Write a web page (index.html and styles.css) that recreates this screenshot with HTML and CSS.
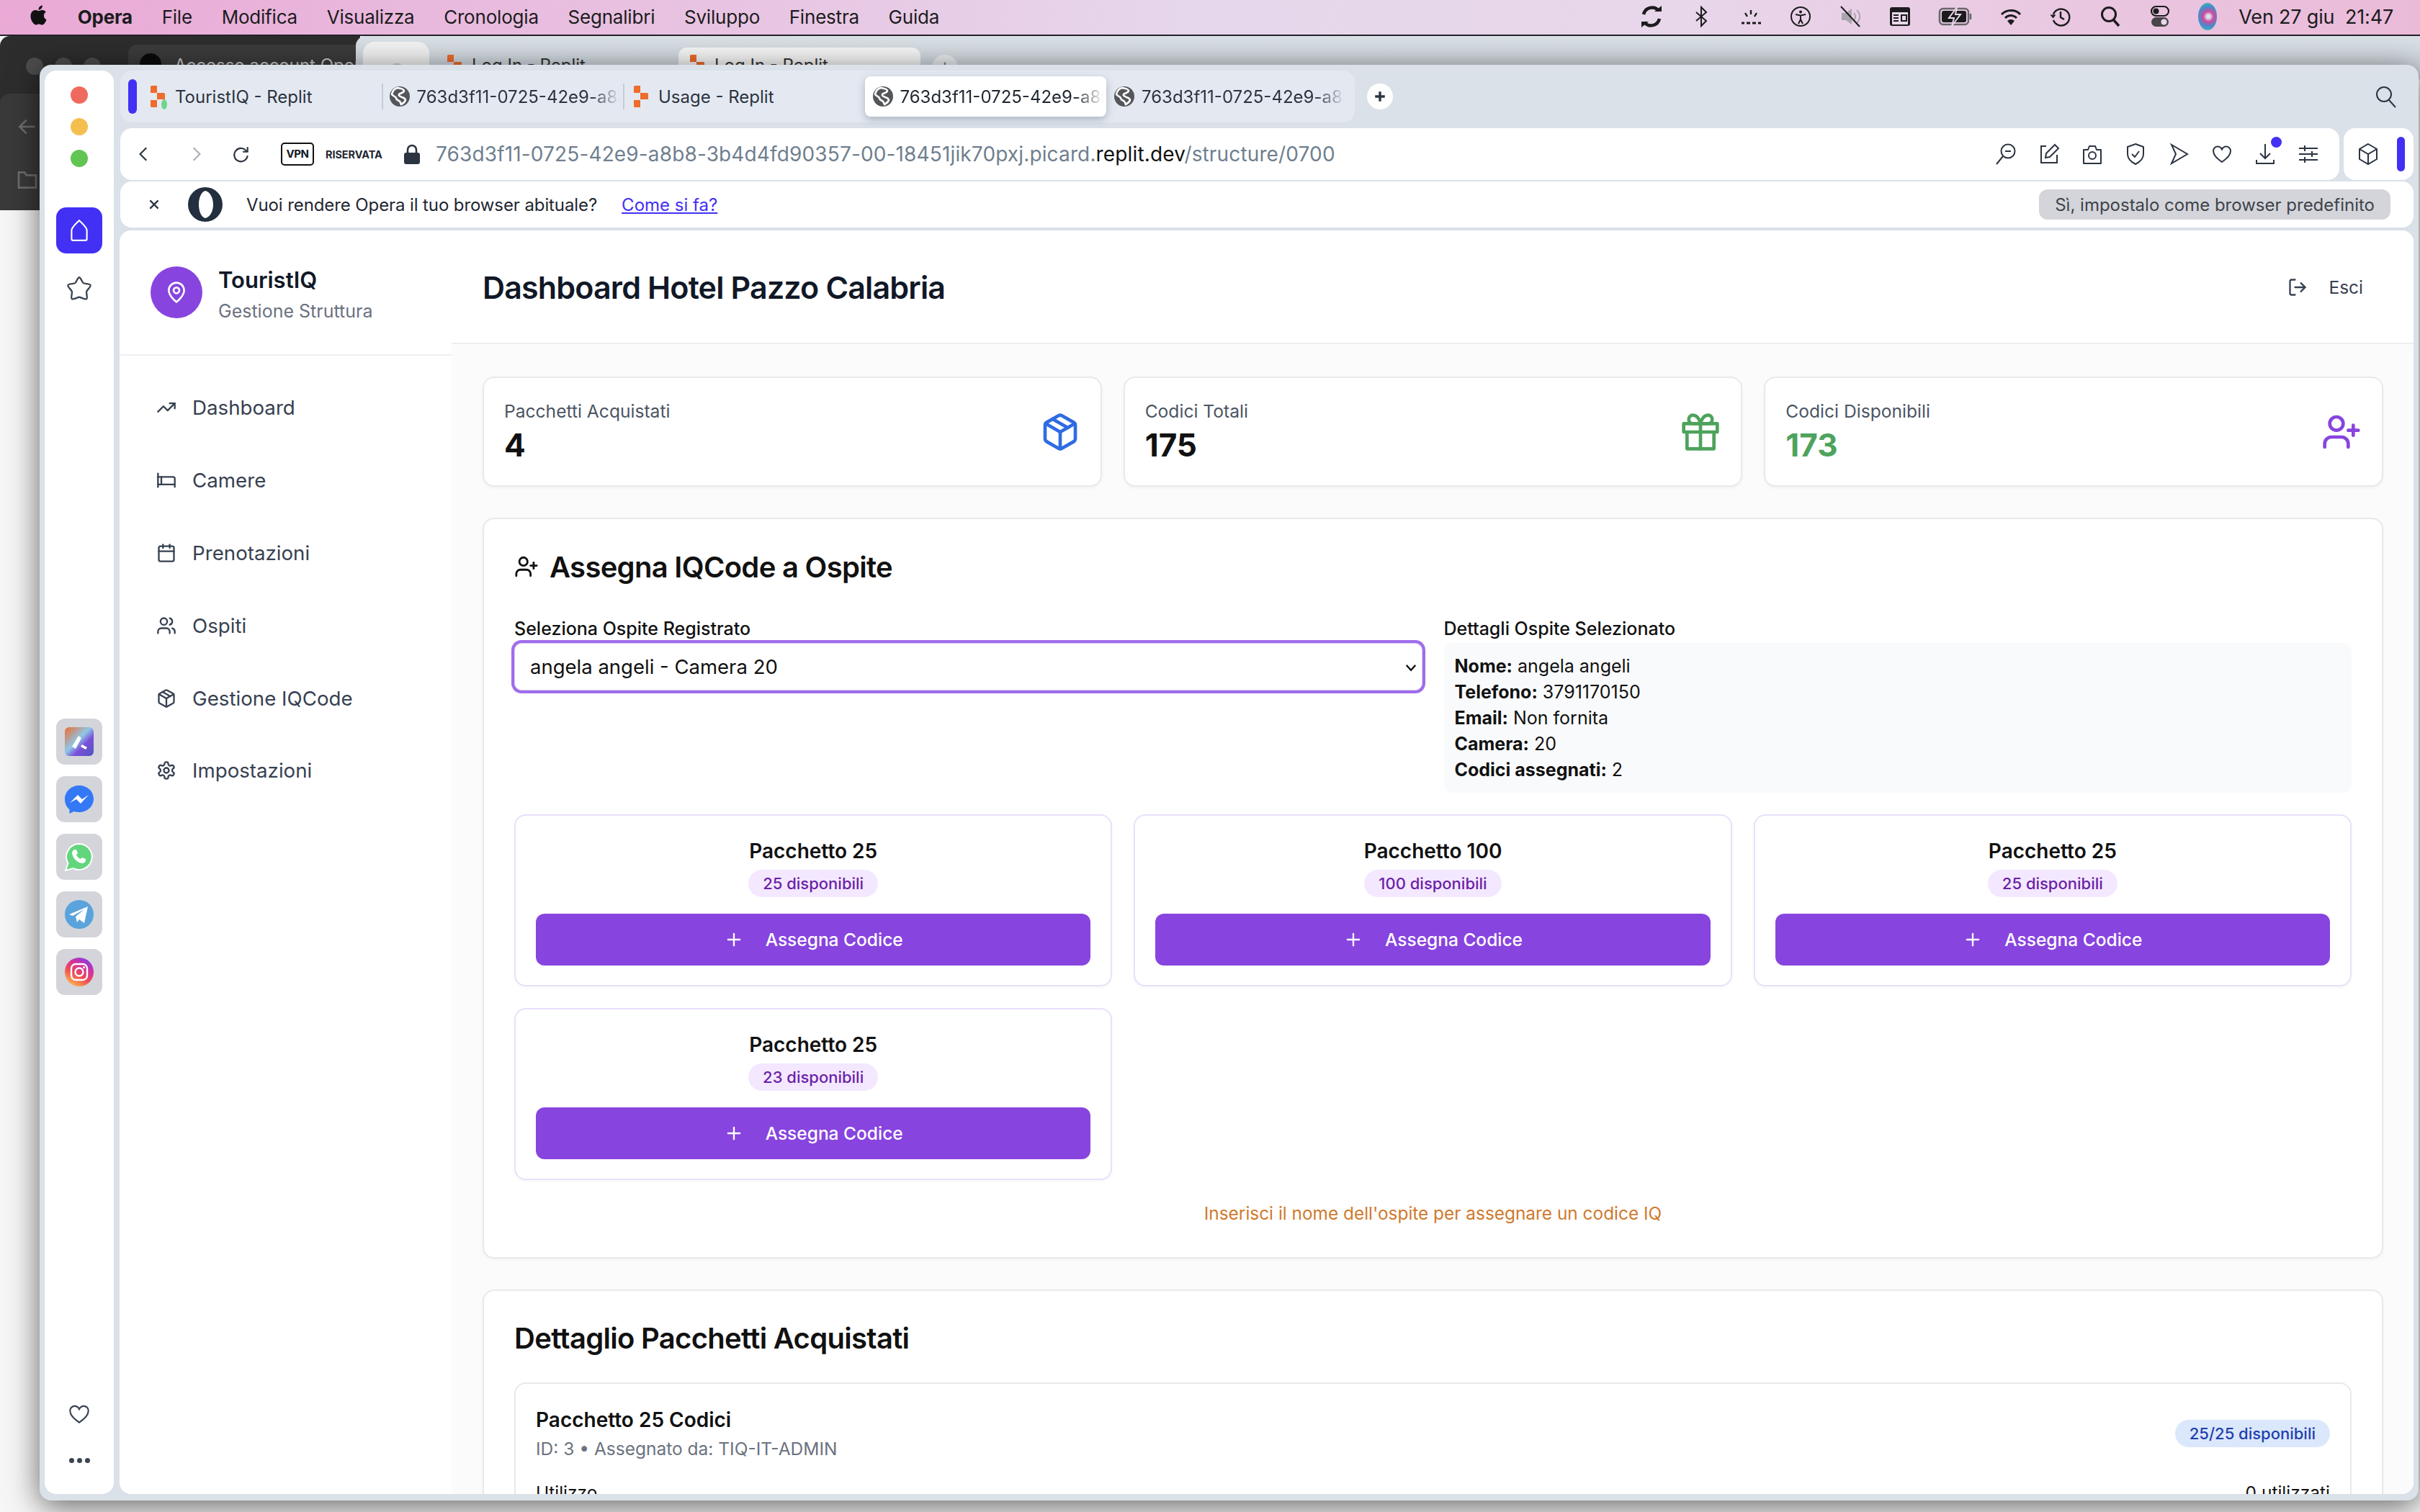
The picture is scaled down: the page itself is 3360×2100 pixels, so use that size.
FILE: index.html
```html
<!DOCTYPE html>
<html lang="it">
<head>
<meta charset="utf-8">
<title>TouristIQ</title>
<link rel="stylesheet" href="styles.css">
</head>
<body>
<svg class="defs" width="0" height="0" aria-hidden="true">
  <defs>
    <symbol id="i-pin" viewBox="0 0 24 24"><path d="M20 10c0 6-8 12-8 12s-8-6-8-12a8 8 0 0 1 16 0Z"/><circle cx="12" cy="10" r="3"/></symbol>
    <symbol id="i-trend" viewBox="0 0 24 24"><polyline points="22 7 13.5 15.5 8.5 10.5 2 17"/><polyline points="16 7 22 7 22 13"/></symbol>
    <symbol id="i-bed" viewBox="0 0 24 24"><path d="M2 4v16"/><path d="M2 8h18a2 2 0 0 1 2 2v10"/><path d="M2 17h20"/><path d="M6 8v9"/></symbol>
    <symbol id="i-cal" viewBox="0 0 24 24"><rect x="3" y="4" width="18" height="18" rx="2"/><line x1="16" y1="2" x2="16" y2="6"/><line x1="8" y1="2" x2="8" y2="6"/><line x1="3" y1="10" x2="21" y2="10"/></symbol>
    <symbol id="i-users" viewBox="0 0 24 24"><path d="M16 21v-2a4 4 0 0 0-4-4H6a4 4 0 0 0-4 4v2"/><circle cx="9" cy="7" r="4"/><path d="M22 21v-2a4 4 0 0 0-3-3.87"/><path d="M16 3.13a4 4 0 0 1 0 7.75"/></symbol>
    <symbol id="i-package" viewBox="0 0 24 24"><path d="m7.5 4.27 9 5.15"/><path d="M21 8a2 2 0 0 0-1-1.73l-7-4a2 2 0 0 0-2 0l-7 4A2 2 0 0 0 3 8v8a2 2 0 0 0 1 1.73l7 4a2 2 0 0 0 2 0l7-4a2 2 0 0 0 1-1.73Z"/><path d="m3.3 7 8.7 5 8.7-5"/><path d="M12 22V12"/></symbol>
    <symbol id="i-gear" viewBox="0 0 24 24"><path d="M12.22 2h-.44a2 2 0 0 0-2 2v.18a2 2 0 0 1-1 1.73l-.43.25a2 2 0 0 1-2 0l-.15-.08a2 2 0 0 0-2.73.73l-.22.38a2 2 0 0 0 .73 2.73l.15.1a2 2 0 0 1 1 1.72v.51a2 2 0 0 1-1 1.74l-.15.09a2 2 0 0 0-.73 2.73l.22.38a2 2 0 0 0 2.73.73l.15-.08a2 2 0 0 1 2 0l.43.25a2 2 0 0 1 1 1.73V20a2 2 0 0 0 2 2h.44a2 2 0 0 0 2-2v-.18a2 2 0 0 1 1-1.73l.43-.25a2 2 0 0 1 2 0l.15.08a2 2 0 0 0 2.73-.73l.22-.39a2 2 0 0 0-.73-2.73l-.15-.08a2 2 0 0 1-1-1.74v-.5a2 2 0 0 1 1-1.74l.15-.09a2 2 0 0 0 .73-2.73l-.22-.38a2 2 0 0 0-2.73-.73l-.15.08a2 2 0 0 1-2 0l-.43-.25a2 2 0 0 1-1-1.73V4a2 2 0 0 0-2-2z"/><circle cx="12" cy="12" r="3"/></symbol>
    <symbol id="i-gift" viewBox="0 0 24 24"><polyline points="20 12 20 22 4 22 4 12"/><rect x="2" y="7" width="20" height="5"/><line x1="12" y1="22" x2="12" y2="7"/><path d="M12 7H7.5a2.5 2.5 0 0 1 0-5C11 2 12 7 12 7z"/><path d="M12 7h4.5a2.5 2.5 0 0 0 0-5C13 2 12 7 12 7z"/></symbol>
    <symbol id="i-userplus" viewBox="0 0 24 24"><path d="M16 21v-2a4 4 0 0 0-4-4H6a4 4 0 0 0-4 4v2"/><circle cx="9" cy="7" r="4"/><line x1="19" y1="8" x2="19" y2="14"/><line x1="22" y1="11" x2="16" y2="11"/></symbol>
    <symbol id="i-logout" viewBox="0 0 24 24"><path d="M9 21H5a2 2 0 0 1-2-2V5a2 2 0 0 1 2-2h4"/><polyline points="16 17 21 12 16 7"/><line x1="21" y1="12" x2="9" y2="12"/></symbol>
    <symbol id="i-plus" viewBox="0 0 24 24"><path d="M5 12h14"/><path d="M12 5v14"/></symbol>
    <symbol id="i-globe" viewBox="0 0 28 28"><circle cx="14" cy="14" r="14" fill="#54565a"/><path d="M11 2c4 1 8 1 9 4 0 3-5 3-7 5-1 2 2 3 4 4 3 1 5 2 5 4-1 3-4 5-6 6-1-2-1-4-3-5-3-1-4-2-4-4-1-2-5-3-6-5 1-5 4-8 8-9z" fill="none" stroke="#fff" stroke-width="2.6"/></symbol>
    <symbol id="i-replit" viewBox="0 0 20 30"><path d="M0 1.5A1.5 1.5 0 0 1 1.500 0H9v10H0zM9 10h9.500A1.500 1.500 0 0 1 20 11.500V19H9zM0 20h9v10H1.500A1.500 1.500 0 0 1 0 28.500z" fill="#ee6c2c"/></symbol>
    <symbol id="i-heart" viewBox="0 0 32 32"><path d="M16 27C8 21 4 17 4 11.500 4 8 7 5.500 10 5.500c2.500 0 4.700 1.300 6 4 1.300-2.700 3.500-4 6-4 3 0 6 2.500 6 6 0 5.500-4 9.500-12 15.500z"/></symbol>
  </defs>
</svg>

<div class="desktop">
  <header class="menubar">
    <div class="menu-left">
      <svg class="apple" viewBox="0 0 24 24"><path d="M12.152 6.896c-.948 0-2.415-1.078-3.960-1.040-2.040.027-3.910 1.183-4.961 3.014-2.117 3.675-.546 9.103 1.519 12.090 1.013 1.454 2.208 3.090 3.792 3.039 1.520-.065 2.090-.987 3.935-.987 1.831 0 2.350.987 3.960.948 1.637-.026 2.676-1.480 3.676-2.948 1.156-1.688 1.636-3.325 1.662-3.415-.039-.013-3.182-1.221-3.220-4.857-.026-3.040 2.480-4.494 2.597-4.559-1.429-2.090-3.623-2.324-4.390-2.376-2-.156-3.675 1.090-4.610 1.090zM15.530 3.830c.843-1.012 1.400-2.427 1.245-3.830-1.207.052-2.662.805-3.532 1.818-.780.896-1.454 2.338-1.273 3.714 1.338.104 2.715-.688 3.559-1.701"/></svg>
      <b class="menu-app">Opera</b>
      <span>File</span><span>Modifica</span><span>Visualizza</span><span>Cronologia</span><span>Segnalibri</span><span>Sviluppo</span><span>Finestra</span><span>Guida</span>
    </div>
    <div class="menu-right">
      <svg class="st" viewBox="0 0 32 32"><g fill="none" stroke="#1c1c1e" stroke-width="4.500"><path d="M26 8A12 12 0 0 0 5 13"/><path d="M6 24a12 12 0 0 0 21-5"/></g><path d="M20 9h10V1zM12 23H2v8z" fill="#1c1c1e"/></svg>
      <svg class="st" viewBox="0 0 32 32"><path d="m9 10 14 12-7 7V3l7 7L9 22" fill="none" stroke="#1c1c1e" stroke-width="2"/></svg>
      <svg class="st" viewBox="0 0 32 32"><g fill="none" stroke="#1c1c1e" stroke-width="2.400"><path d="M16 7v6M8 11l3 5M24 11l-3 5"/><path d="M3 25h4M10 25h5M18 25h5M26 25h4" stroke-width="3"/></g></svg>
      <svg class="st" viewBox="0 0 32 32"><circle cx="16" cy="16" r="13" fill="none" stroke="#1c1c1e" stroke-width="2"/><circle cx="16" cy="9.500" r="2" fill="#1c1c1e"/><path d="M9 13l7 1.500 7-1.500M16 14v6l-3 6M16 20l3 6" fill="none" stroke="#1c1c1e" stroke-width="2"/></svg>
      <svg class="st" viewBox="0 0 32 32"><path d="M4 11h6l8-6v22l-8-6H4z" fill="#a9a4ad"/><path d="M21 11a7 7 0 0 1 0 10M25 7a12 12 0 0 1 0 18" fill="none" stroke="#a9a4ad" stroke-width="2"/><path d="M3 2l26 28" stroke="#1c1c1e" stroke-width="2"/></svg>
      <svg class="st" viewBox="0 0 32 32"><rect x="2" y="3" width="28" height="26" rx="3" fill="#1c1c1e"/><rect x="5" y="10" width="22" height="17" fill="#e9d8ea"/><path d="M7 14h7M7 18h7M7 22h7M18 14h7v8h-7z" stroke="#1c1c1e" stroke-width="2" fill="none"/></svg>
      <svg class="st st-wide" viewBox="0 0 48 32"><rect x="2" y="5" width="40" height="22" rx="5" fill="none" stroke="#6a666c" stroke-width="2.500"/><rect x="5" y="8" width="34" height="16" rx="3" fill="#1c1c1e"/><path d="M26 3 15 18h7l-3 11 12-16h-7z" fill="#1c1c1e" stroke="#e9d8ea" stroke-width="2"/><path d="M45 12v8" stroke="#6a666c" stroke-width="2.500"/></svg>
      <svg class="st" viewBox="0 0 32 32"><path d="M3 13a18 18 0 0 1 26 0M8 18a11 11 0 0 1 16 0" fill="none" stroke="#1c1c1e" stroke-width="3"/><path d="M16 28l-5-6a7 7 0 0 1 10 0z" fill="#1c1c1e"/></svg>
      <svg class="st" viewBox="0 0 32 32"><path d="M6 13a11.500 11.500 0 1 1 0 8" fill="none" stroke="#1c1c1e" stroke-width="2.400"/><path d="M1.500 13.500h8l-4 5z" fill="#1c1c1e"/><path d="M16 9v8l5 3" fill="none" stroke="#1c1c1e" stroke-width="2.400"/></svg>
      <svg class="st" viewBox="0 0 32 32"><circle cx="14" cy="13" r="9.500" fill="none" stroke="#1c1c1e" stroke-width="3"/><path d="M20 20l8 9" stroke="#1c1c1e" stroke-width="3.500"/></svg>
      <svg class="st" viewBox="0 0 32 32"><rect x="4" y="2" width="24" height="13" rx="6.500" fill="none" stroke="#1c1c1e" stroke-width="2.200"/><circle cx="10.500" cy="8.500" r="4" fill="#1c1c1e"/><rect x="4" y="17" width="24" height="13" rx="6.500" fill="#47444a"/><circle cx="21.500" cy="23.500" r="4" fill="#e9d8ea"/></svg>
      <span class="siri"></span>
      <span class="clock">Ven 27 giu&nbsp; 21:47</span>
    </div>
  </header>

  <div class="back-dark">
    <span class="bd-dot bd-dot-1"></span><span class="bd-dot bd-dot-2"></span><span class="bd-dot bd-dot-3"></span>
    <div class="bd-tab"><i class="bd-logo"></i>Accesso account Opera</div>
    <div class="bd-panel">
      <svg class="bd-arrow" viewBox="0 0 24 24"><path d="M20 12H4M11 5l-7 7 7 7"/></svg>
      <svg class="bd-folder" viewBox="0 0 24 24"><path d="M3 20V4h6l2 3h10v13z"/></svg>
    </div>
  </div>
  <div class="back-light">
    <div class="bl-pill"><i></i></div>
    <div class="bl-tab bl-tab-plain"><svg class="fav"><use href="#i-replit"/></svg>Log In - Replit</div>
    <div class="bl-tab bl-tab-white"><svg class="fav"><use href="#i-replit"/></svg>Log In - Replit</div>
    <i class="bl-plus">+</i>
  </div>

  <div class="window">
    <aside class="rail">
      <span class="light light-r"></span><span class="light light-y"></span><span class="light light-g"></span>
      <div class="rail-home"><svg viewBox="0 0 32 32"><path d="M16 3c3 3 10 9 10 13v11a2 2 0 0 1-2 2H8a2 2 0 0 1-2-2V16C6 12 13 6 16 3z"/></svg></div>
      <svg class="rail-star" viewBox="0 0 36 36"><path d="M18 4c2 0 3.500 6 5.500 7.500 2 1.300 8.500.8 9.300 2.800.7 2.200-4.600 6-5.200 8.400-.6 2.300 1.800 8.300 0 9.700-1.800 1.300-7.100-2.300-9.600-2.300s-7.800 3.600-9.600 2.300c-1.800-1.400.6-7.400 0-9.700-.6-2.400-5.900-6.200-5.200-8.400.8-2 7.300-1.500 9.300-2.800C14.500 10 16 4 18 4z"/></svg>
      <div class="rail-apps">
        <div class="app"><svg viewBox="0 0 40 40"><defs><linearGradient id="g-aria" x1="0" y1="0" x2="1" y2="1"><stop offset="0" stop-color="#f06a2e"/><stop offset=".45" stop-color="#8fc8e8"/><stop offset=".65" stop-color="#7a50d8"/><stop offset="1" stop-color="#4f56c0"/></linearGradient></defs><rect width="40" height="40" rx="6" fill="url(#g-aria)"/><path d="M10 27 19 12l4 3-8 15zM24 24l7 4-2 3-7-4z" fill="#fff"/></svg></div>
        <div class="app"><svg viewBox="0 0 40 40"><path d="M20 1C9 1 0 9 0 20c0 6 2.500 11 6.500 14.500V40l6-3c2.300.7 4.800 1 7.500 1 11 0 20-8 20-18.500S31 1 20 1z" fill="#3478f6"/><path d="M7 25l11-11 6 6 9-6-11 12-6-6z" fill="#fff"/></svg></div>
        <div class="app"><svg viewBox="0 0 40 40"><path d="M20 2a18 18 0 0 0-15.500 27L1 39l10.500-3A18 18 0 1 0 20 2z" fill="#63d57d" stroke="#fff" stroke-width="2"/><path d="M13 10c-2 1-3 3-3 5 1 7 7 13 14 14 2 0 4-1 5-3l0-3-5-2-2 2c-3-1-5-3-6-6l2-2-2-5z" fill="#fff"/></svg></div>
        <div class="app"><svg viewBox="0 0 40 40"><circle cx="20" cy="20" r="20" fill="#5aa3dc"/><path d="M6 20 32 9l-5 23-7-5-3 4-2-8 12-10-16 9z" fill="#fff"/></svg></div>
        <div class="app"><svg viewBox="0 0 40 40"><defs><linearGradient id="g-ig" x1=".2" y1="1" x2=".8" y2="0"><stop offset="0" stop-color="#fdc34f"/><stop offset=".4" stop-color="#ef4a55"/><stop offset=".7" stop-color="#d0319f"/><stop offset="1" stop-color="#7a3ff0"/></linearGradient></defs><circle cx="20" cy="20" r="20" fill="url(#g-ig)"/><rect x="9" y="9" width="22" height="22" rx="6" fill="none" stroke="#fff" stroke-width="2.400"/><circle cx="20" cy="20" r="5.500" fill="none" stroke="#fff" stroke-width="2.400"/><circle cx="26.500" cy="13.500" r="1.600" fill="#fff"/></svg></div>
      </div>
      <svg class="rail-heart"><use href="#i-heart"/></svg>
      <div class="rail-dots"><i></i><i></i><i></i></div>
    </aside>

    <div class="browser">
      <div class="tabrow">
        <div class="tabstrip">
          <span class="strip-mark"></span>
          <div class="tab tab-replit"><svg class="fav"><use href="#i-replit"/></svg><i class="fav-dot"></i><span class="tab-name">TouristIQ - Replit</span></div>
          <div class="tab tab-sep"><svg class="globe"><use href="#i-globe"/></svg><span class="tab-name tab-fade">763d3f11-0725-42e9-a8b8</span></div>
          <div class="tab tab-replit tab-sep"><svg class="fav"><use href="#i-replit"/></svg><span class="tab-name">Usage - Replit</span></div>
          <div class="tab tab-active"><svg class="globe"><use href="#i-globe"/></svg><span class="tab-name tab-fade">763d3f11-0725-42e9-a8b8</span></div>
          <div class="tab"><svg class="globe"><use href="#i-globe"/></svg><span class="tab-name tab-fade">763d3f11-0725-42e9-a8b8</span></div>
        </div>
        <span class="newtab"><svg viewBox="0 0 16 16"><path d="M8 2v12M2 8h12"/></svg></span>
        <svg class="tab-search" viewBox="0 0 32 32"><circle cx="13" cy="13" r="10"/><path d="M20 21l9 10"/></svg>
      </div>

      <div class="addrrow">
        <div class="addr">
          <svg class="nav-a nav-back" viewBox="0 0 24 24"><path d="M15 4 7 12l8 8"/></svg>
          <svg class="nav-a nav-off" viewBox="0 0 24 24"><path d="m9 4 8 8-8 8"/></svg>
          <svg class="nav-a" viewBox="0 0 24 24"><path d="M19 9a8.500 8.500 0 1 0 1 5"/><path d="M20 3v6h-6" /></svg>
          <span class="vpn">VPN</span>
          <span class="vpn-label">RISERVATA</span>
          <svg class="lock" viewBox="0 0 24 28"><path d="M6 13V8a6 6 0 0 1 12 0v5" fill="none" stroke="#2b3440" stroke-width="2.600"/><rect x="1" y="12" width="22" height="16" rx="3" fill="#2b3440"/></svg>
          <span class="url">763d3f11-0725-42e9-a8b8-3b4d4fd90357-00-18451jik70pxj.picard.<em>replit.dev</em>/structure/0700</span>
          <div class="addr-tools">
            <svg viewBox="0 0 32 32"><circle cx="19" cy="12" r="9.500"/><path d="M12 19 3 30M15 12h8"/></svg>
            <svg viewBox="0 0 32 32"><path d="M12 5H5v23h22v-11"/><path d="M24 3l5 5-12 12-6 1 1-6z"/></svg>
            <svg viewBox="0 0 32 32"><path d="M4 10h6l2-5h8l2 5h6v19H4z" stroke-linejoin="round"/><circle cx="16" cy="18" r="5"/></svg>
            <svg viewBox="0 0 32 32"><path d="M16 2l11 4v10c0 7-5 11-11 14C10 27 5 23 5 16V6z"/><path d="M11 16l4 4 6-8"/></svg>
            <svg viewBox="0 0 32 32"><path d="M6 3l22 13L6 29l6-13z"/></svg>
            <svg viewBox="0 0 32 32"><use href="#i-heart"/></svg>
            <svg viewBox="0 0 32 32"><path d="M16 2v20M9 15l7 7 7-7M4 24v5h24v-5"/></svg>
            <svg viewBox="0 0 32 32"><path d="M3 8h26M3 16h26M3 24h26M11 4v8M21 12v8M11 20v8"/></svg>
            <i class="dl-dot"></i>
          </div>
        </div>
        <div class="addr-side">
          <svg viewBox="0 0 32 32"><path d="M16 2l12 7v14l-12 7-12-7V9z"/><path d="M4 9l12 7 12-7M16 16v14"/></svg>
          <span class="side-mark"></span>
        </div>
      </div>

      <div class="notice">
        <svg class="notice-x" viewBox="0 0 16 16"><path d="M3 3l10 10M13 3 3 13"/></svg>
        <svg class="opera" viewBox="0 0 48 48"><path fill-rule="evenodd" d="M24 0a24 24 0 1 0 0 48 24 24 0 0 0 0-48zm0 5c-5 1-9 9-9 19s4 18 9 19c6-1 11-9 11-19S30 6 24 5z" fill="#232f3e"/></svg>
        <span class="notice-text">Vuoi rendere Opera il tuo browser abituale?</span>
        <a class="notice-link">Come si fa?</a>
        <span class="notice-btn">Sì, impostalo come browser predefinito</span>
      </div>

      <div class="page">
        <aside class="sidebar">
          <div class="brand">
            <span class="brand-logo"><svg class="ic"><use href="#i-pin"/></svg></span>
            <div class="brand-text">
              <div class="brand-name">TouristIQ</div>
              <div class="brand-sub">Gestione Struttura</div>
            </div>
          </div>
          <nav class="nav">
            <a class="nav-item"><svg class="ic"><use href="#i-trend"/></svg>Dashboard</a>
            <a class="nav-item"><svg class="ic"><use href="#i-bed"/></svg>Camere</a>
            <a class="nav-item"><svg class="ic"><use href="#i-cal"/></svg>Prenotazioni</a>
            <a class="nav-item"><svg class="ic"><use href="#i-users"/></svg>Ospiti</a>
            <a class="nav-item"><svg class="ic"><use href="#i-package"/></svg>Gestione IQCode</a>
            <a class="nav-item"><svg class="ic"><use href="#i-gear"/></svg>Impostazioni</a>
          </nav>
        </aside>

        <main class="main">
          <div class="main-head">
            <h1>Dashboard Hotel Pazzo Calabria</h1>
            <div class="logout"><svg class="ic"><use href="#i-logout"/></svg>Esci</div>
          </div>
          <div class="main-body">
            <section class="stats">
              <div class="stat"><div><div class="stat-label">Pacchetti Acquistati</div><div class="stat-value">4</div></div><svg class="ic stat-ic c-blue"><use href="#i-package"/></svg></div>
              <div class="stat"><div><div class="stat-label">Codici Totali</div><div class="stat-value">175</div></div><svg class="ic stat-ic c-green"><use href="#i-gift"/></svg></div>
              <div class="stat"><div><div class="stat-label">Codici Disponibili</div><div class="stat-value c-green">173</div></div><svg class="ic stat-ic c-purple"><use href="#i-userplus"/></svg></div>
            </section>

            <section class="card card-assign">
              <h2 class="card-title"><svg class="ic"><use href="#i-userplus"/></svg>Assegna IQCode a Ospite</h2>
              <div class="assign-grid">
                <div>
                  <div class="field-label">Seleziona Ospite Registrato</div>
                  <div class="select-wrap">
                    <select class="select"><option>angela angeli - Camera 20</option></select>
                    <svg class="chev" viewBox="0 0 16 16"><path d="M3 5.500 8 11l5-5.500"/></svg>
                  </div>
                </div>
                <div>
                  <div class="field-label">Dettagli Ospite Selezionato</div>
                  <div class="guest">
                    <div><b>Nome:</b> angela angeli</div>
                    <div><b>Telefono:</b> 3791170150</div>
                    <div><b>Email:</b> Non fornita</div>
                    <div><b>Camera:</b> 20</div>
                    <div><b>Codici assegnati:</b> 2</div>
                  </div>
                </div>
              </div>
              <div class="packs">
                <div class="pack"><div class="pack-name">Pacchetto 25</div><span class="pack-badge">25 disponibili</span><button class="pack-btn"><svg class="ic"><use href="#i-plus"/></svg>Assegna Codice</button></div>
                <div class="pack"><div class="pack-name">Pacchetto 100</div><span class="pack-badge">100 disponibili</span><button class="pack-btn"><svg class="ic"><use href="#i-plus"/></svg>Assegna Codice</button></div>
                <div class="pack"><div class="pack-name">Pacchetto 25</div><span class="pack-badge">25 disponibili</span><button class="pack-btn"><svg class="ic"><use href="#i-plus"/></svg>Assegna Codice</button></div>
                <div class="pack"><div class="pack-name">Pacchetto 25</div><span class="pack-badge">23 disponibili</span><button class="pack-btn"><svg class="ic"><use href="#i-plus"/></svg>Assegna Codice</button></div>
              </div>
              <p class="warn">Inserisci il nome dell'ospite per assegnare un codice IQ</p>
            </section>

            <section class="card card-detail">
              <h2 class="card-title card-title-detail">Dettaglio Pacchetti Acquistati</h2>
              <div class="detail">
                <div class="detail-head">
                  <div>
                    <div class="detail-name">Pacchetto 25 Codici</div>
                    <div class="detail-sub">ID: 3 • Assegnato da: TIQ-IT-ADMIN</div>
                  </div>
                  <span class="detail-badge">25/25 disponibili</span>
                </div>
                <div class="detail-use"><span>Utilizzo</span><span>0 utilizzati</span></div>
              </div>
            </section>
          </div>
        </main>
      </div>
    </div>
  </div>
</div>
</body>
</html>
```
FILE: styles.css
```css
* { box-sizing: border-box; }
html, body { margin: 0; height: 100%; }
body { background: #f6f6f6; font-family: Inter, "Noto Sans", sans-serif; color: #111827; overflow: hidden; }
.defs { position: absolute; }
.desktop { position: relative; width: 3360px; height: 2100px; overflow: hidden; }

/* macOS menu bar */
.menubar { position: relative; z-index: 3; height: 50px; border-bottom: 2px solid #25202a; padding: 0 37px 2px 40px;
  display: flex; align-items: center; justify-content: space-between;
  background: linear-gradient(90deg, #eaa9d6 0%, #e8c4e2 30%, #e6d8ec 50%, #e8d6ea 70%, #ebbad9 100%);
  font-size: 26px; color: #1c1c1e; letter-spacing: -.2px; }
.menu-left { display: flex; align-items: center; gap: 40.700px; }
.apple { width: 27px; height: 32px; fill: #111; margin-top: -4px; }
.menu-app { font-weight: 700; }
.menu-right { display: flex; align-items: center; gap: 37px; }
.st { width: 32px; height: 32px; }
.st-wide { width: 48px; }
.siri { width: 26px; height: 38px; border-radius: 50%; background: radial-gradient(circle at 55% 50%, #d8e0f0 0 10%, #d04a9a 30%, #3f8fd0 60%, #52c0a0 90%); }
.clock { font-size: 27px; margin-left: -7px; }

/* windows behind */
.back-dark { position: absolute; left: 0; top: 50px; width: 500px; height: 242px; background: #2d2d2d; border-radius: 14px 0 0 0; overflow: hidden; }
.bd-dot { position: absolute; top: 30px; width: 24px; height: 24px; border-radius: 50%; background: #4d4d4d; }
.bd-dot-1 { left: 36px; }
.bd-dot-2 { left: 76px; }
.bd-dot-3 { left: 116px; }
.bd-tab { position: absolute; left: 178px; top: 12px; width: 330px; height: 60px; border-radius: 12px; background: #3b3b3b; color: #c8c8c8; font-size: 24px; padding: 14px 0 0 64px; white-space: nowrap; }
.bd-logo { position: absolute; left: 16px; top: 12px; width: 30px; height: 30px; border-radius: 50%; background: #0a0a0a; }
.bd-panel { position: absolute; left: 0; top: 80px; right: 0; bottom: 0; background: #3a3a3a; border-radius: 14px 0 0 0; }
.bd-arrow, .bd-folder { position: absolute; left: 22px; width: 32px; height: 32px; fill: none; stroke: #6e6e6e; stroke-width: 2; }
.bd-arrow { top: 30px; }
.bd-folder { top: 104px; }
.back-light { position: absolute; left: 494px; top: 50px; right: 0; height: 60px; border-radius: 14px 0 0 0; background: linear-gradient(180deg, #d9e1e7, #cbd2d8); overflow: hidden; font-size: 24px; color: #333; }
.bl-pill { position: absolute; left: 10px; top: 8px; width: 92px; height: 70px; border-radius: 16px; background: #f2f2f2; }
.bl-pill i { position: absolute; left: 35px; top: 30px; width: 24px; height: 24px; border-radius: 50%; background: #c9c9c9; }
.bl-tab { position: absolute; top: 16px; height: 60px; padding: 10px 0 0 20px; display: flex; gap: 14px; }
.bl-tab-plain { left: 107px; width: 320px; }
.bl-tab-white { left: 448px; width: 336px; border-radius: 12px; background: #f7f7f7; padding-left: 16px; }
.bl-plus { position: absolute; left: 800px; top: 26px; width: 36px; height: 36px; border-radius: 50%; background: #e9edf0; text-align: center; font-style: normal; color: #777; }

/* main browser window */
.window { position: absolute; left: 55px; top: 90px; width: 3303px; height: 1994px; z-index: 2; padding: 8px 7px 9px; gap: 8px; display: flex;
  background: #dae1e8; border-radius: 16px; box-shadow: 0 8px 44px rgba(0,0,0,.6); }
.rail { width: 96px; flex: none; background: #fff; border-radius: 16px; display: flex; flex-direction: column; align-items: center; padding-top: 22px; }
.light { width: 24px; height: 24px; border-radius: 50%; margin-bottom: 20px; }
.light-r { background: #ee6a5f; }
.light-y { background: #f5bf4f; }
.light-g { background: #61c554; margin-bottom: 0; }
.rail-home { width: 64px; height: 64px; margin-top: 56px; border-radius: 14px; background: #4230f5; display: flex; align-items: center; justify-content: center; }
.rail-home svg { width: 34px; height: 34px; fill: none; stroke: #fff; stroke-width: 2; }
.rail-star { width: 38px; height: 38px; margin-top: 29px; fill: none; stroke: #3b4450; stroke-width: 2.200; }
.rail-apps { margin-top: 579px; display: flex; flex-direction: column; gap: 16px; }
.app { width: 64px; height: 64px; border-radius: 12px; background: #d3d5da; display: flex; align-items: center; justify-content: center; }
.app svg { width: 40px; height: 40px; }
.rail-heart { width: 34px; height: 34px; margin-top: auto; fill: none; stroke: #3b4450; stroke-width: 2; }
.rail-dots { display: flex; gap: 4px; margin: 44px 0 43px; }
.rail-dots i { width: 7px; height: 7px; border-radius: 50%; background: #3b4450; }

.browser { flex: 1; min-width: 0; display: flex; flex-direction: column; }
.tabrow { height: 72px; flex: none; display: flex; align-items: center; padding-left: 1px; }
.tabstrip { height: 72px; width: 1714px; flex: none; background: #e4e9f1; border-radius: 16px; padding: 0 5px 0 11px; display: flex; align-items: center; font-size: 24px; color: #2b3440; }
.strip-mark { width: 12px; height: 48px; border-radius: 6px; background: #4230f5; flex: none; margin-right: 4px; }
.tab { position: relative; width: 335.500px; height: 56px; flex: none; display: flex; align-items: center; padding-left: 11px; gap: 10px; white-space: nowrap; overflow: hidden; }
.tab-replit { padding-left: 15px; gap: 14px; }
.tab-sep::before { content: ""; position: absolute; left: 0; top: 10px; height: 36px; width: 2px; background: #c5ccd5; }
.tab-active { background: #fff; border-radius: 8px; box-shadow: 0 4px 12px rgba(60,80,100,.35); overflow: visible; color: #1f2731; }
.fav { width: 20px; height: 30px; flex: none; }
.fav-dot { position: absolute; left: 30px; top: 32px; width: 8px; height: 14px; border-radius: 50%; background: #6ed58b; }
.globe { width: 28px; height: 28px; flex: none; }
.tab-name { overflow: hidden; }
.tab-fade { width: 282px; -webkit-mask-image: linear-gradient(90deg, #000 86%, transparent); mask-image: linear-gradient(90deg, #000 86%, transparent); }
.newtab { width: 36px; height: 36px; margin-left: 17px; border-radius: 50%; background: #fff; display: flex; align-items: center; justify-content: center; flex: none; }
.newtab svg { width: 18px; height: 18px; fill: none; stroke: #2b3440; stroke-width: 3; }
.tab-search { width: 32px; height: 32px; margin-left: auto; margin-right: 22px; fill: none; stroke: #2b3440; stroke-width: 2; }

.addrrow { margin-top: 8px; height: 72px; flex: none; display: flex; gap: 6px; padding-left: 1px; }
.addr { flex: 1; min-width: 0; background: #fff; border-radius: 16px; display: flex; align-items: center; padding-left: 20px; }
.nav-a { width: 26px; height: 26px; fill: none; stroke: #2b3440; stroke-width: 2; flex: none; margin-right: 37px; }
.nav-back { margin-right: 46px; }
.nav-off { stroke: #a9afb7; }
.vpn { width: 46px; height: 32px; border: 2px solid #111; border-radius: 5px; font-size: 15px; font-weight: 700; text-align: center; line-height: 28px; margin-left: 5px; flex: none; letter-spacing: -.5px; }
.vpn-label { font-size: 14.500px; font-weight: 700; margin-left: 16px; width: 88px; color: #1f2731; flex: none; letter-spacing: -.1px; }
.lock { width: 24px; height: 28px; margin-left: 20px; flex: none; }
.url { margin-left: 21px; font-size: 28px; color: #6f7f8f; letter-spacing: .14px; white-space: nowrap; }
.url em { font-style: normal; color: #111; }
.addr-tools { position: relative; margin-left: auto; margin-right: 27px; display: flex; gap: 28px; }
.addr-tools svg { width: 32px; height: 32px; fill: none; stroke: #2b3440; stroke-width: 2; }
.dl-dot { position: absolute; right: 53px; top: -8px; width: 15px; height: 15px; border-radius: 50%; background: #4230f5; }
.addr-side { width: 97px; flex: none; background: #fff; border-radius: 16px; display: flex; align-items: center; padding-left: 18px; gap: 24px; }
.addr-side svg { width: 32px; height: 36px; fill: none; stroke: #2b3440; stroke-width: 2; }
.side-mark { width: 11px; height: 48px; border-radius: 6px; background: #4230f5; }

.notice { margin-top: 2px; height: 64px; flex: none; margin-left: 1px; background: #fff; border-radius: 16px; display: flex; align-items: center; padding: 0 32px 0 38px; font-size: 24px; color: #1f2731; }
.notice-x { width: 18px; height: 18px; fill: none; stroke: #2b3440; stroke-width: 2; flex: none; }
.opera { width: 48px; height: 48px; margin-left: 38px; flex: none; }
.notice-text { margin-left: 33px; letter-spacing: -.1px; }
.notice-link { margin-left: 34px; color: #4230f5; text-decoration: underline; }
.notice-btn { margin-left: auto; height: 42px; padding: 0 22px; border-radius: 12px; background: #d3d5da; color: #3f434b; display: flex; align-items: center; }

/* page */
.page { margin-top: 4px; flex: 1; min-height: 0; display: flex; background: #fff; border-radius: 16px; overflow: hidden; }
.ic { fill: none; stroke: currentColor; stroke-width: 2; stroke-linecap: round; stroke-linejoin: round; flex: none; }
.sidebar { width: 461px; flex: none; background: #fff; }
.brand { height: 174px; border-bottom: 2px solid #eceef1; padding-left: 43px; display: flex; align-items: center; gap: 22px; }
.brand-logo { width: 72px; height: 72px; border-radius: 50%; background: #8844df; color: #fff; display: flex; align-items: center; justify-content: center; }
.brand-logo .ic { width: 32px; height: 32px; }
.brand-text { padding-top: 4px; }
.brand-name { font-size: 31px; font-weight: 600; line-height: 42px; color: #111827; }
.brand-sub { font-size: 25px; line-height: 32px; color: #6b7280; margin-top: 6px; }
.nav { padding-top: 22px; }
.nav-item { height: 100.800px; padding-left: 51px; display: flex; align-items: center; gap: 22px; font-size: 27.700px; color: #374151; }
.nav-item .ic { width: 28px; height: 28px; }

.main { flex: 1; min-width: 0; background: #fbfbfc; }
.main-head { height: 158px; background: #fff; border-bottom: 2px solid #eceef1; padding: 2px 70px 0 43px; display: flex; align-items: center; justify-content: space-between; }
h1 { margin: 0; font-size: 43px; font-weight: 600; color: #111827; letter-spacing: -.85px; }
.logout { display: flex; align-items: center; gap: 29px; font-size: 24.500px; color: #374151; }
.logout .ic { width: 28px; height: 28px; }
.main-body { padding: 45px 42px 0 43px; }
.stats { display: grid; grid-template-columns: repeat(3, 1fr); gap: 30px; }
.stat, .card { background: #fff; border: 2px solid #e8e9ec; border-radius: 16px; box-shadow: 0 2px 4px rgba(0,0,0,.04); }
.stat { height: 153px; padding: 0 28px; display: flex; align-items: center; justify-content: space-between; }
.stat-label { font-size: 24.600px; line-height: 32px; color: #4b5563; }
.stat-value { font-size: 44px; font-weight: 700; line-height: 54px; margin-top: 4px; color: #111; }
.stat-ic { width: 56px; height: 56px; }
.c-blue { color: #2f6be4; }
.stat-value.c-green, .c-green { color: #4ea35c; }
.c-purple { color: #8844df; }

.card { margin-top: 43px; padding: 42px 42px 45px; }
.card-title { margin: 0 0 44px; height: 48px; display: flex; align-items: center; gap: 15px; font-size: 40px; font-weight: 600; letter-spacing: -.7px; color: #111; }
.card-title .ic { width: 34px; height: 34px; }
.card-title-detail { margin-bottom: 38px; margin-top: -1px; }
.assign-grid { display: grid; grid-template-columns: 1fr 1fr; gap: 30px; }
.field-label { font-size: 25px; font-weight: 500; line-height: 36px; margin-bottom: 2px; color: #111; }
.select-wrap { position: relative; }
.select { width: 100%; height: 66px; appearance: none; background: #fff; border: 1px solid #d6cdf0; border-radius: 10px; box-shadow: 0 0 0 4px #a06cec; outline: none; padding: 0 21px; font: 400 27.500px Inter, sans-serif; color: #111; }
.chev { position: absolute; right: 6px; top: 24px; width: 20px; height: 20px; fill: none; stroke: #111; stroke-width: 1.800; }
.guest { background: #f9fafb; border-radius: 12px; padding: 14px 15px; font-size: 25px; line-height: 36px; color: #111; }
.guest b { font-weight: 700; }
.packs { display: grid; grid-template-columns: repeat(3, 1fr); gap: 30px; margin-top: 30px; }
.pack { height: 239px; border: 2px solid #e9e0fb; border-radius: 16px; background: #fff; padding: 30px 28px 0; display: flex; flex-direction: column; align-items: center; box-shadow: 0 2px 4px rgba(0,0,0,.04); }
.pack-name { font-size: 28px; font-weight: 600; line-height: 38px; color: #111; }
.pack-badge { margin-top: 7px; height: 38px; padding: 0 20px; border-radius: 19px; background: #f3e8ff; color: #6b21a8; font-size: 22px; font-weight: 500; display: flex; align-items: center; }
.pack-btn { margin-top: 23px; width: 100%; height: 72px; border: 0; border-radius: 12px; background: #8844df; color: #fff; font: 500 24.500px Inter, sans-serif; display: flex; align-items: center; justify-content: center; gap: 30px; padding-bottom: 2px; }
.pack-btn .ic { width: 28px; height: 28px; }
.warn { margin: 30px 0 0; font-size: 24.400px; line-height: 32px; text-align: center; color: #cf7a2e; }

.detail { border: 2px solid #e8e9ec; border-radius: 16px; padding: 32px 28px 0; }
.detail-head { display: flex; align-items: center; justify-content: space-between; }
.detail-name { font-size: 28px; font-weight: 600; line-height: 36px; color: #111; }
.detail-sub { font-size: 24.500px; line-height: 32px; margin-top: 6px; color: #6b7280; }
.detail-badge { height: 38px; padding: 0 20px; border-radius: 19px; background: #dbe7fb; color: #1e40af; font-size: 22px; font-weight: 500; display: flex; align-items: center; }
.detail-use { margin-top: 29px; display: flex; justify-content: space-between; font-size: 24.500px; line-height: 32px; color: #111; }
```
